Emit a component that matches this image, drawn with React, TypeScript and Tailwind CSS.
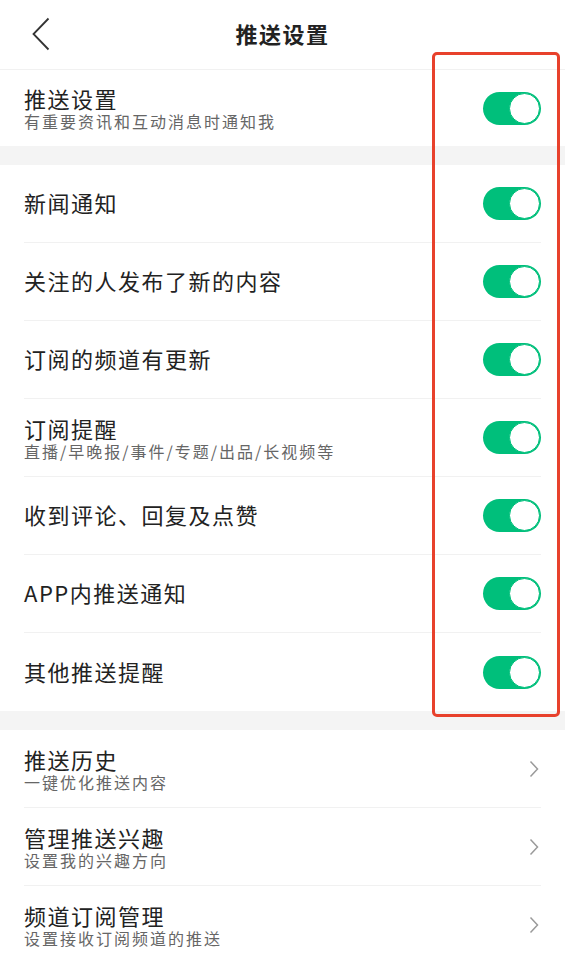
import React, { useState } from 'react';

type Item = { title: string; sub?: string };

const toggles: Item[] = [
  { title: '新闻通知' },
  { title: '关注的人发布了新的内容' },
  { title: '订阅的频道有更新' },
  { title: '订阅提醒', sub: '直播/早晚报/事件/专题/出品/长视频等' },
  { title: '收到评论、回复及点赞' },
  { title: 'APP内推送通知' },
  { title: '其他推送提醒' },
];

const links: Item[] = [
  { title: '推送历史', sub: '一键优化推送内容' },
  { title: '管理推送兴趣', sub: '设置我的兴趣方向' },
  { title: '频道订阅管理', sub: '设置接收订阅频道的推送' },
];

const Switch: React.FC<{ on: boolean; onToggle: () => void }> = ({ on, onToggle }) => (
  <button
    onClick={onToggle}
    className={`relative w-[58px] h-[33px] rounded-full shrink-0 ${on ? 'bg-[#00bf7b]' : 'bg-[#e2e2e2]'}`}
  >
    <span
      className={`absolute top-[1px] w-[31px] h-[31px] rounded-full bg-white border ${
        on ? 'right-[1px] border-[#00bf7b]' : 'left-[1px] border-[#d8d8d8]'
      }`}
    />
  </button>
);

const Label: React.FC<Item> = ({ title, sub }) => (
  <div className={`flex flex-col ${sub ? 'pt-[2px]' : 'pb-[3px]'}`}>
    <span className="text-[22px] leading-[24px] tracking-[1.5px] text-[#222]">{title}</span>
    {sub && <span className="text-[16px] leading-[22px] tracking-[2px] text-[#666]">{sub}</span>}
  </div>
);

export default function App() {
  const [master, setMaster] = useState(true);
  const [flags, setFlags] = useState(toggles.map(() => true));

  return (
    <div
      className="relative w-[565px] h-[963px] overflow-hidden bg-white"
      style={{ fontFamily: '"Noto Sans CJK SC", "Noto Sans", sans-serif' }}
    >
      {/* header */}
      <div className="relative h-[70px] flex items-center justify-center border-b border-[#f1f1f1] pb-[3px]">
        <svg className="absolute left-[31px] top-[17px]" width="20" height="34" viewBox="0 0 20 34" fill="none">
          <path d="M17.5 1.5 L2.5 17 L17.5 32.5" stroke="#333" strokeWidth="1.8" />
        </svg>
        <h1 className="text-[22px] tracking-[1.5px] font-bold text-[#222]">推送设置</h1>
      </div>

      {/* master switch */}
      <div className="h-[76px] px-6 flex items-center justify-between">
        <Label title="推送设置" sub="有重要资讯和互动消息时通知我" />
        <Switch on={master} onToggle={() => setMaster(!master)} />
      </div>

      <div className="h-[19px] bg-[#f4f4f4]" />

      <div className="px-6">
        {toggles.map((t, i) => (
          <div
            key={t.title}
            className={`h-[78px] flex items-center justify-between ${
              i < toggles.length - 1 ? 'border-b border-[#f1f1f1]' : ''
            }`}
          >
            <Label {...t} />
            <Switch
              on={flags[i]}
              onToggle={() => setFlags(flags.map((f, j) => (j === i ? !f : f)))}
            />
          </div>
        ))}
      </div>

      <div className="h-[19px] bg-[#f4f4f4]" />

      <div className="px-6">
        {links.map((l) => (
          <div key={l.title} className="h-[78px] flex items-center justify-between border-b border-[#f1f1f1]">
            <Label {...l} />
            <svg width="10" height="18" viewBox="0 0 10 18" fill="none" className="mr-[2px]">
              <path d="M1.5 1.5 L8.5 9 L1.5 16.5" stroke="#9a9a9a" strokeWidth="1.5" />
            </svg>
          </div>
        ))}
      </div>

      {/* highlight frame around the switches */}
      <div className="absolute left-[432px] top-[52px] w-[128px] h-[665px] border-[3px] border-[#e8412c] rounded-[5px] pointer-events-none" />
    </div>
  );
}
